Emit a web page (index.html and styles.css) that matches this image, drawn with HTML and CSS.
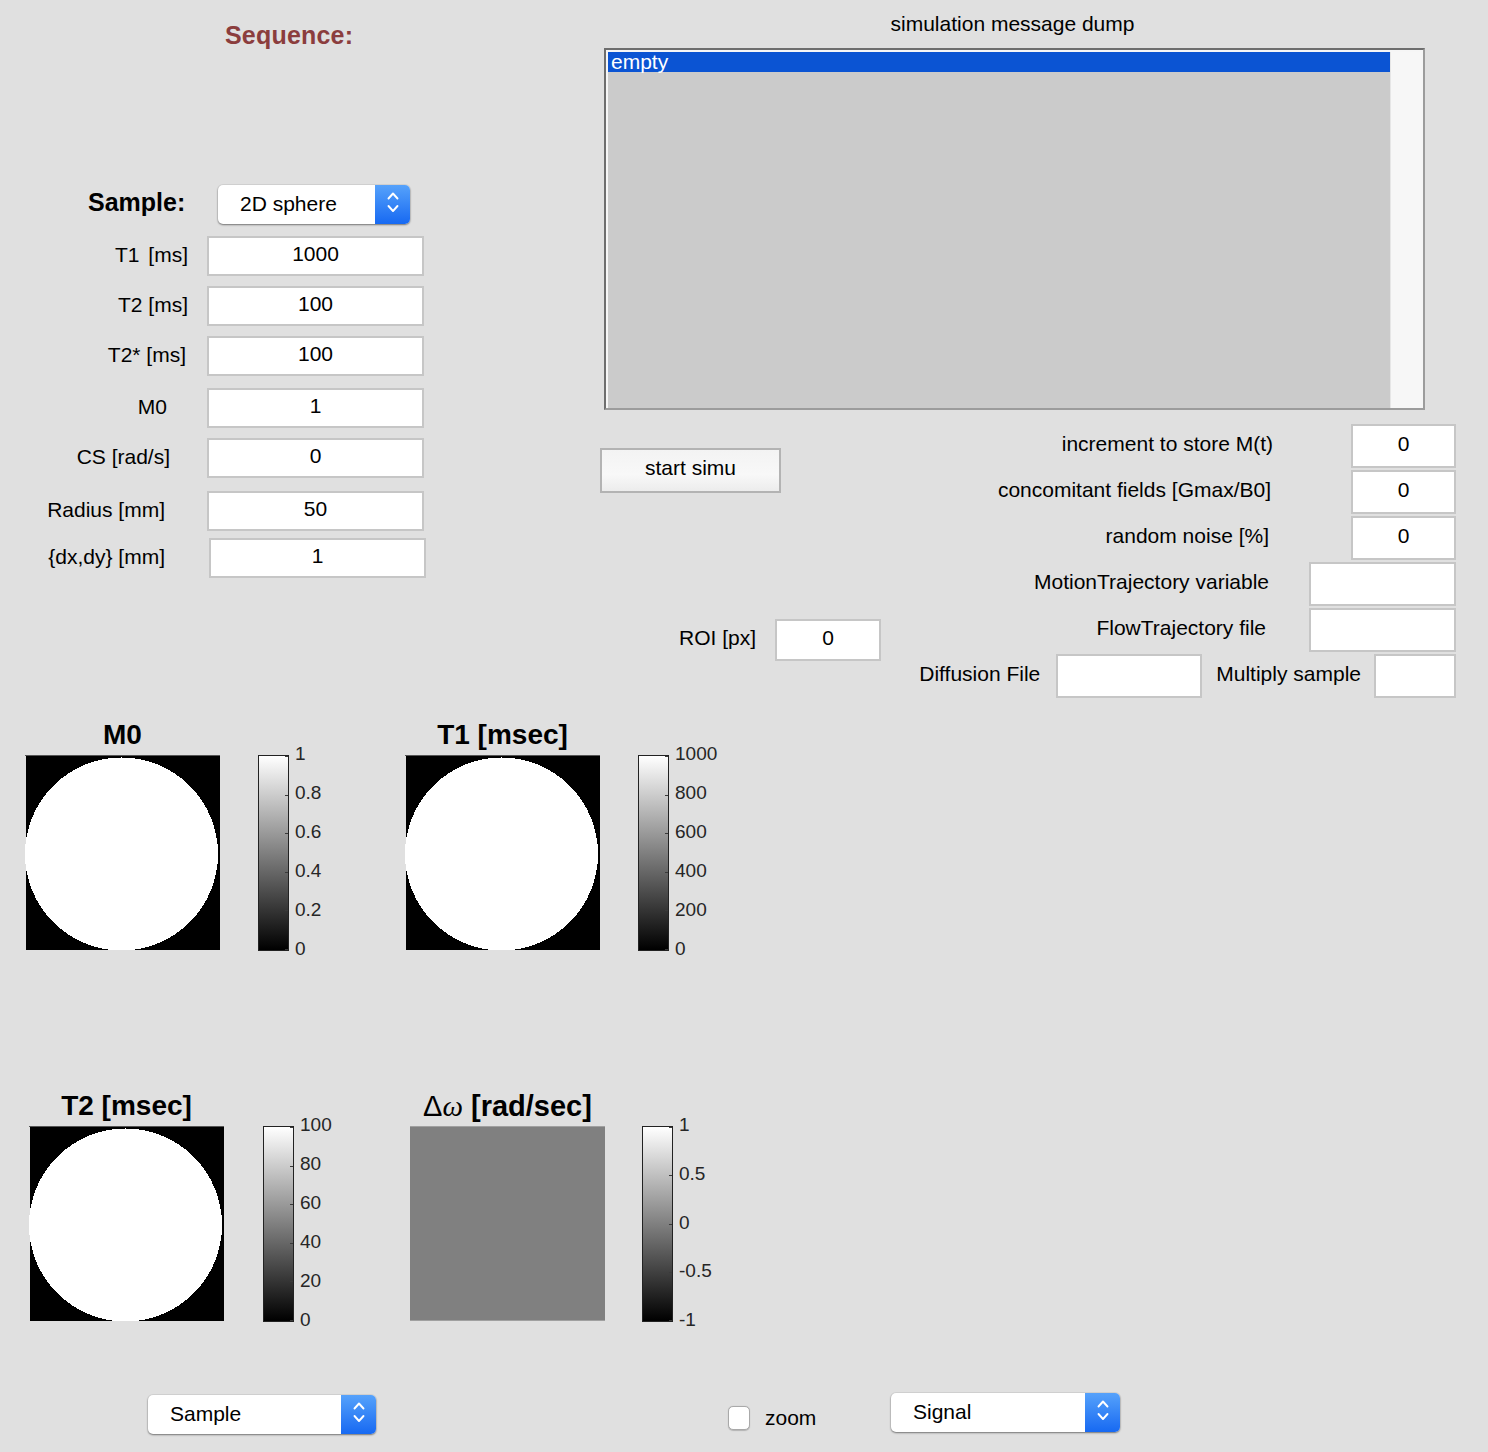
FILE: index.html
```html
<!DOCTYPE html>
<html>
<head>
<meta charset="utf-8">
<title>Simulation</title>
<link rel="stylesheet" href="styles.css">
</head>
<body>
<div class="fig">
  <section class="top">
    <div class="params">
      <h1 class="seq-title">Sequence:</h1>
      <div class="sample-row">
        <span class="sample-label">Sample:</span>
        <div class="popup popup--sample">
          <span class="popup-text">2D sphere</span>
          <span class="popup-btn"><svg width="14" height="39" viewBox="0 0 14 39"><path d="M2.5 13.5 L7 8.5 L11.5 13.5 M2.5 21 L7 26 L11.5 21" stroke="#fff" stroke-width="1.9" fill="none" stroke-linecap="round" stroke-linejoin="round"/></svg></span>
        </div>
      </div>
      <div class="prow prow--first"><span class="plabel plabel--t1">T1 [ms]</span><div class="field field--param">1000</div></div>
      <div class="prow"><span class="plabel">T2 [ms]</span><div class="field field--param">100</div></div>
      <div class="prow"><span class="plabel plabel--t2s">T2* [ms]</span><div class="field field--param">100</div></div>
      <div class="prow prow--g12"><span class="plabel plabel--m0">M0</span><div class="field field--param">1</div></div>
      <div class="prow"><span class="plabel plabel--cs">CS [rad/s]</span><div class="field field--param">0</div></div>
      <div class="prow prow--g13"><span class="plabel plabel--rad">Radius [mm]</span><div class="field field--param">50</div></div>
      <div class="prow prow--g7"><span class="plabel plabel--dx">{dx,dy} [mm]</span><div class="field field--param">1</div></div>
    </div>

    <div class="sim">
      <div class="sim-title">simulation message dump</div>
      <div class="listbox">
        <div class="list-items">
          <div class="list-item list-item--selected">empty</div>
        </div>
        <div class="list-scroll"></div>
      </div>
      <div class="controls">
        <div class="ctl-left">
          <button class="btn">start simu</button>
          <div class="roi-row">
            <span class="clabel roi-label">ROI [px]</span>
            <div class="field field--roi">0</div>
          </div>
        </div>
        <div class="ctl-right">
          <div class="crow"><span class="clabel clabel--a">increment to store M(t)</span><div class="field field--s">0</div></div>
          <div class="crow"><span class="clabel clabel--b">concomitant fields [Gmax/B0]</span><div class="field field--s">0</div></div>
          <div class="crow"><span class="clabel clabel--c">random noise [%]</span><div class="field field--s">0</div></div>
          <div class="crow"><span class="clabel clabel--d">MotionTrajectory variable</span><div class="field field--m"></div></div>
          <div class="crow"><span class="clabel clabel--e">FlowTrajectory file</span><div class="field field--m"></div></div>
          <div class="crow">
            <span class="clabel clabel--diff">Diffusion File</span><div class="field field--diff"></div>
            <span class="clabel clabel--mult">Multiply sample</span><div class="field field--mult"></div>
          </div>
        </div>
      </div>
    </div>
  </section>

  <section class="plots">
    <div class="plot-row plot-row--1">
      <div class="plot">
        <div class="plot-title">M0</div>
        <div class="plot-body">
          <svg class="img" viewBox="0 0 195 195" shape-rendering="crispEdges"><rect width="195" height="195" fill="#000"/><circle cx="96.5" cy="98.5" r="97" fill="#fff"/></svg>
          <div class="cbar"><div class="cbar-ticks"><i></i><i></i><i></i><i></i><i></i><i></i></div></div>
          <div class="cbar-labels"><span>1</span><span>0.8</span><span>0.6</span><span>0.4</span><span>0.2</span><span>0</span></div>
        </div>
      </div>
      <div class="plot">
        <div class="plot-title">T1 [msec]</div>
        <div class="plot-body">
          <svg class="img" viewBox="0 0 195 195" shape-rendering="crispEdges"><rect width="195" height="195" fill="#000"/><circle cx="96.5" cy="98.5" r="97" fill="#fff"/></svg>
          <div class="cbar"><div class="cbar-ticks"><i></i><i></i><i></i><i></i><i></i><i></i></div></div>
          <div class="cbar-labels"><span>1000</span><span>800</span><span>600</span><span>400</span><span>200</span><span>0</span></div>
        </div>
      </div>
    </div>
    <div class="plot-row plot-row--2">
      <div class="plot">
        <div class="plot-title">T2 [msec]</div>
        <div class="plot-body">
          <svg class="img" viewBox="0 0 195 195" shape-rendering="crispEdges"><rect width="195" height="195" fill="#000"/><circle cx="96.5" cy="98.5" r="97" fill="#fff"/></svg>
          <div class="cbar cbar--t2"><div class="cbar-ticks"><i></i><i></i><i></i><i></i><i></i><i></i></div></div>
          <div class="cbar-labels"><span>100</span><span>80</span><span>60</span><span>40</span><span>20</span><span>0</span></div>
        </div>
      </div>
      <div class="plot">
        <div class="plot-title plot-title--dw"><span class="greek">Δ</span><span class="omega">ω</span> [rad/sec]</div>
        <div class="plot-body">
          <div class="img img--gray"></div>
          <div class="cbar cbar--dw"><div class="cbar-ticks"><i></i><i></i><i></i><i></i><i></i></div></div>
          <div class="cbar-labels"><span>1</span><span>0.5</span><span>0</span><span>-0.5</span><span>-1</span></div>
        </div>
      </div>
    </div>
  </section>

  <section class="bottom">
    <div class="popup popup--bsample">
      <span class="popup-text">Sample</span>
      <span class="popup-btn"><svg width="14" height="39" viewBox="0 0 14 39"><path d="M2.5 13.5 L7 8.5 L11.5 13.5 M2.5 21 L7 26 L11.5 21" stroke="#fff" stroke-width="1.9" fill="none" stroke-linecap="round" stroke-linejoin="round"/></svg></span>
    </div>
    <div class="chk"></div>
    <span class="chk-label">zoom</span>
    <div class="popup popup--signal">
      <span class="popup-text">Signal</span>
      <span class="popup-btn"><svg width="14" height="39" viewBox="0 0 14 39"><path d="M2.5 13.5 L7 8.5 L11.5 13.5 M2.5 21 L7 26 L11.5 21" stroke="#fff" stroke-width="1.9" fill="none" stroke-linecap="round" stroke-linejoin="round"/></svg></span>
    </div>
  </section>
</div>
</body>
</html>
```

FILE: styles.css
```css
* { box-sizing: border-box; }
html, body { margin: 0; padding: 0; }
body {
  background: #e0e0e0;
  font-family: "Liberation Sans", Arial, Helvetica, sans-serif;
  color: #000;
  width: 1488px;
  height: 1452px;
  overflow: hidden;
}
.fig { width: 1488px; height: 1452px; }

/* ---------- top ---------- */
.top { display: flex; height: 720px; }
.params { width: 600px; flex: none; }
.seq-title {
  margin: 0;
  padding: 20px 0 0 225px;
  font-size: 25px;
  line-height: 30px;
  font-weight: bold;
  color: #8b3d3d;
  letter-spacing: 0.2px;
}
.sample-row {
  display: flex;
  align-items: center;
  margin-top: 135px;
  padding-left: 88px;
  height: 39px;
}
.sample-label {
  width: 130px;
  font-size: 25px;
  font-weight: bold;
  line-height: 30px;
  padding-bottom: 5px;
}

.popup {
  display: flex;
  height: 39px;
  background: #fff;
  border-radius: 5px;
  box-shadow: 0 1px 2px rgba(0,0,0,0.45), 0 0 0 1px rgba(0,0,0,0.05);
}
.popup--sample { width: 192px; }
.popup-text {
  flex: 1;
  padding-left: 22px;
  font-size: 21px;
  line-height: 37px;
}
.popup-btn {
  width: 35px;
  display: flex;
  align-items: center;
  justify-content: center;
  background: linear-gradient(#56a2fb, #1769f2);
  border-radius: 0 5px 5px 0;
}
.popup-btn svg { display: block; }

.prow { display: flex; align-items: center; margin-top: 10px; }
.prow--first { margin-top: 12px; }
.prow--g12 { margin-top: 12px; }
.prow--g13 { margin-top: 13px; }
.prow--g7 { margin-top: 7px; }
.plabel {
  width: 207px;
  text-align: right;
  padding-right: 19px;
  padding-bottom: 2px;
  font-size: 21px;
  white-space: nowrap;
}
.plabel--t1 { word-spacing: 3px; }
.plabel--t2s { padding-right: 21px; }
.plabel--m0 { padding-right: 40px; }
.plabel--cs { padding-right: 37px; }
.plabel--rad { padding-right: 42px; }
.plabel--dx { width: 209px; padding-right: 44px; }

.field {
  background: #fff;
  border: 2px solid #c6c6c6;
  display: flex;
  align-items: center;
  justify-content: center;
  font-size: 21px;
  padding-bottom: 5px;
  flex: none;
}
.field--param { width: 217px; height: 40px; }

/* ---------- simulation panel ---------- */
.sim { flex: 1; }
.sim-title {
  margin-left: 2px;
  width: 821px;
  text-align: center;
  padding-top: 12px;
  font-size: 21px;
  line-height: 24px;
}
.listbox {
  margin: 12px 0 0 4px;
  width: 821px;
  height: 362px;
  border: 2px solid;
  border-color: #6e6e6e #9c9c9c #9c9c9c #6e6e6e;
  background: #f6f6f6;
  padding: 2px 2px 0 2px;
  display: flex;
}
.list-items { width: 782px; background: #cbcbcb; }
.list-item--selected {
  background: #0b54d3;
  color: #fff;
  height: 20px;
  font-size: 21px;
  line-height: 20px;
  padding-left: 3px;
}
.list-scroll { flex: 1; background: #f7f7f7; border-left: 1px solid #e6e6e6; }

.controls { display: flex; margin-top: 14px; }
.ctl-left { width: 281px; flex: none; padding-top: 24px; }
.btn {
  display: flex;
  align-items: center;
  justify-content: center;
  width: 181px;
  height: 45px;
  border: 2px solid #b3b3b3;
  background: linear-gradient(#f3f3f3, #f8f8f8 60%, #ececec);
  font-family: "Liberation Sans", Arial, sans-serif;
  font-size: 21px;
  color: #000;
  padding: 0 0 5px;
  margin: 0;
}
.roi-row {
  display: flex;
  justify-content: flex-end;
  align-items: center;
  margin-top: 126px;
}
.roi-label { margin-right: 19px; }
.field--roi { width: 106px; height: 42px; }

.ctl-right {
  width: 575px;
  flex: none;
  display: flex;
  flex-direction: column;
  align-items: flex-end;
  gap: 2px;
}
.crow { display: flex; align-items: center; height: 44px; }
.clabel { font-size: 21px; white-space: nowrap; padding-bottom: 4px; }
.clabel--a { margin-right: 78px; }
.clabel--b { margin-right: 80px; }
.clabel--c { margin-right: 82px; }
.clabel--d { margin-right: 40px; }
.clabel--e { margin-right: 43px; }
.clabel--diff { margin-right: 16px; }
.clabel--mult { margin-left: 14px; margin-right: 13px; }
.field--s { width: 105px; height: 44px; }
.field--m { width: 147px; height: 44px; }
.field--diff { width: 146px; height: 44px; }
.field--mult { width: 82px; height: 44px; }

/* ---------- plots ---------- */
.plot-row { display: flex; }
.plot-row--1 { padding-left: 25px; }
.plot-row--2 { padding-left: 29px; margin-top: 140px; }
.plot { width: 380px; flex: none; }
.plot-row--2 .plot { width: 381px; }
.plot-title {
  width: 195px;
  text-align: center;
  font-size: 28px;
  font-weight: bold;
  line-height: 30px;
  margin-bottom: 5px;
  white-space: nowrap;
}
.plot-title--dw { font-size: 29px; }
.greek { font-weight: normal; }
.omega {
  font-family: "Liberation Serif", "DejaVu Serif", serif;
  font-style: italic;
  font-weight: normal;
}
.plot-body { display: flex; }
.img { display: block; width: 195px; height: 195px; flex: none; border-top: 1px solid #555; }
.img--gray { background: #808080; border-top: 1px solid #a0a0a0; border-bottom: 1px solid #a0a0a0; }
.cbar {
  margin-left: 38px;
  width: 31px;
  height: 196px;
  flex: none;
  border: 1px solid #222;
  background: linear-gradient(#fff, #000);
  position: relative;
}
.cbar--t2 { margin-left: 39px; }
.cbar--dw { margin-left: 37px; }
.cbar-ticks {
  position: absolute;
  inset: 0;
  display: flex;
  flex-direction: column;
  justify-content: space-between;
  align-items: flex-end;
}
.cbar-ticks i { display: block; width: 3px; height: 1px; background: #3a3a3a; }
.cbar-labels {
  display: flex;
  flex-direction: column;
  justify-content: space-between;
  margin: -12px 0 -9px 6px;
  font-size: 19px;
  line-height: 22px;
  color: #262626;
}

/* ---------- bottom ---------- */
.bottom {
  display: flex;
  align-items: flex-start;
  margin-top: 71px;
  padding-left: 148px;
}
.popup--bsample { width: 228px; margin-top: 2px; }
.chk {
  width: 22px;
  height: 24px;
  margin: 13px 0 0 352px;
  border: 1px solid #a9a9a9;
  border-radius: 5px;
  background: #fff;
  box-shadow: 0 0.5px 1px rgba(0,0,0,0.2);
  flex: none;
}
.chk-label {
  width: 141px;
  padding-left: 15px;
  margin-top: 13px;
  font-size: 21px;
  line-height: 24px;
  flex: none;
}
.popup--signal { width: 229px; }
```
